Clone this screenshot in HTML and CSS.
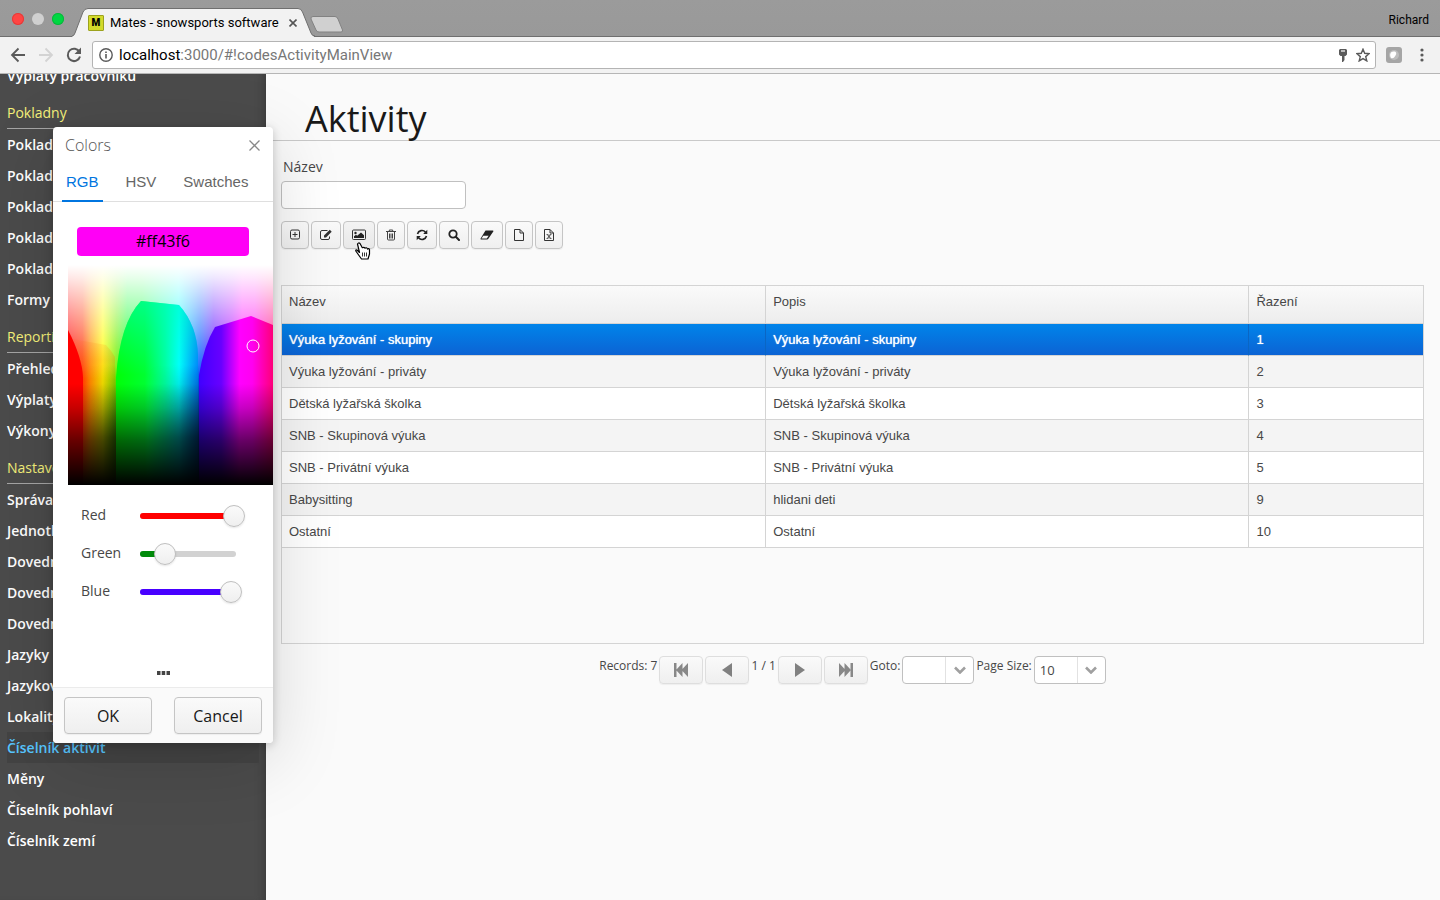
FILE: index.html
```
<!DOCTYPE html>
<html lang="cs">
<head>
  <meta charset="UTF-8" />
  <meta name="viewport" content="width=device-width, initial-scale=1" />
  <title>Mates - snowsports software</title>
  <link rel="stylesheet" href="styles.css">
</head>
<body>
  <header class="browser">
    <div class="tab-strip">
      <div class="lights"><span class="light red"></span><span class="light grey"></span><span class="light green"></span></div>
      <div class="browser-tab">
        <svg class="tab-shape" width="244" height="29" viewBox="0 0 244 29"><path d="M0 28.5 C2 28 2 27 3 25 L11 4 Q12.500 .5 16 .5 H226 Q229 .5 230.500 4 L239 25 Q240 28 242 28.500 V29 H0Z" fill="#f2f2f2"/><path d="M0 28 Q2 28 3 25 L11 4 Q12.500 .5 16 .5 H226 Q229 .5 230.500 4 L239 25 Q240 28 243 28" fill="none" stroke="#6f6f6f"/></svg>
        <div class="tab-content">
          <span class="favicon">M</span>
          <span class="tab-title">Mates - snowsports software</span>
          <button class="bare" aria-label="Close tab"><svg width="8" height="8" viewBox="0 0 8 8"><path d="M.5.5l7 7M7.500.5l-7 7" stroke="#555" stroke-width="1.600"/></svg></button>
        </div>
      </div>
      <button class="bare new-tab" aria-label="New tab"><svg width="34" height="17" viewBox="0 0 34 17"><path d="M3 .5H25Q27 .5 28 3L32.500 14Q33 16 31 16H9Q7 16 6 14L1 3Q.5.5 3 .5Z" fill="#d0d0d0" stroke="#828282"/></svg></button>
      <span class="profile">Richard</span>
    </div>
    <div class="toolbar">
      <button class="bare" aria-label="Back"><svg width="16" height="16" viewBox="0 0 16 16"><path d="M15 8H2M8.500 1.500L2 8l6.500 6.500" fill="none" stroke="#5a5a5a" stroke-width="1.800"/></svg></button>
      <button class="bare" aria-label="Forward"><svg width="16" height="16" viewBox="0 0 16 16"><path d="M1 8H14M7.500 1.500L14 8l-6.500 6.500" fill="none" stroke="#d3d3d3" stroke-width="1.800"/></svg></button>
      <button class="bare" aria-label="Reload"><svg width="16" height="16" viewBox="0 0 16 16"><path d="M13.500 5A6.200 6.200 0 1 0 14 9.500" fill="none" stroke="#5a5a5a" stroke-width="2"/><path d="M15 .5V7H8.500Z" fill="#5a5a5a"/></svg></button>
      <div class="address">
        <svg width="14" height="14" viewBox="0 0 14 14"><circle cx="7" cy="7" r="6.200" fill="none" stroke="#5a5a5a" stroke-width="1.400"/><path d="M6.200 6h1.600v4.500H6.200zM6.200 3.400h1.600V5H6.200z" fill="#5a5a5a"/></svg>
        <span class="url"><b>localhost</b>:3000/#!codesActivityMainView</span>
        <svg width="8" height="13" viewBox="0 0 8 13"><path d="M1 0h6l1 1v4.500L6.500 7H5.500v4L4 13H3V7H1.500L0 5.500V1Z" fill="#5a5a5a"/><path d="M2 2h4" stroke="#fff" stroke-width="1.200"/></svg>
        <svg class="star" width="14" height="14" viewBox="0 0 14 14"><path d="M7 1.200l1.700 4.100 4.400.4-3.400 2.900 1.100 4.300L7 10.600l-3.800 2.300 1.100-4.300L.9 5.700l4.400-.4Z" fill="none" stroke="#5a5a5a" stroke-width="1.400"/></svg>
      </div>
      <svg class="extension" width="16" height="16" viewBox="0 0 16 16"><rect width="16" height="16" rx="3" fill="#a5a5a5"/><circle cx="8" cy="8" r="5" fill="#bdbdbd"/><path d="M5 11C3 7 5 4 8 4.500c2-.5 3 2 1.500 4C8.500 10.500 7 12 5 11Z" fill="#fff"/></svg>
      <button class="bare" aria-label="Menu"><svg width="4" height="14" viewBox="0 0 4 14"><circle cx="2" cy="2" r="1.600" fill="#5a5a5a"/><circle cx="2" cy="7" r="1.600" fill="#5a5a5a"/><circle cx="2" cy="12" r="1.600" fill="#5a5a5a"/></svg></button>
    </div>
  </header>

  <div class="app">
    <nav class="sidebar">
      <div class="menu">
        <a href="#">Výplaty pracovníků</a>
        <h2>Pokladny</h2>
        <a href="#">Pokladny</a>
        <a href="#">Pokladny</a>
        <a href="#">Pokladny</a>
        <a href="#">Pokladny</a>
        <a href="#">Pokladny</a>
        <a href="#">Formy</a>
        <h2>Reporting</h2>
        <a href="#">Přehledy</a>
        <a href="#">Výplaty</a>
        <a href="#">Výkony</a>
        <h2>Nastavení</h2>
        <a href="#">Správa</a>
        <a href="#">Jednotky</a>
        <a href="#">Dovednosti</a>
        <a href="#">Dovednosti</a>
        <a href="#">Dovednosti</a>
        <a href="#">Jazyky</a>
        <a href="#">Jazykové</a>
        <a href="#">Lokality</a>
        <a href="#" class="active">Číselník aktivit</a>
        <a href="#">Měny</a>
        <a href="#">Číselník pohlaví</a>
        <a href="#">Číselník zemí</a>
      </div>
    </nav>

    <main class="content">
      <h1>Aktivity</h1>
      <div class="view">
        <label class="field-label" for="nazev">Název</label>
        <input class="field" id="nazev" type="text">

        <div class="actions">
          <button class="btn" aria-label="Přidat"><svg width="10" height="12" viewBox="0 0 10 12"><rect x=".5" y="1" width="9" height="9" rx="1.500" fill="none" stroke="#333"/><path d="M5 3v5M2.500 5.500h5" stroke="#333"/></svg></button>
          <button class="btn" aria-label="Upravit"><svg width="12" height="12" viewBox="0 0 12 12"><path d="M7.500 1.500H2Q.5 1.500.5 3v6Q.5 10.500 2 10.500h6Q9.500 10.500 9.500 9V7.500" fill="none" stroke="#333"/><path d="M4 6.500L9.800.8l1.900 1.900L6 8.500H4Z" fill="#333"/></svg></button>
          <button class="btn hover" aria-label="Barva"><svg width="14" height="12" viewBox="0 0 14 12"><rect x=".5" y="1" width="13" height="9.500" rx="1" fill="none" stroke="#333"/><circle cx="3.500" cy="4" r="1.200" fill="#222"/><path d="M2 9V7.200L4 5.800l1.200 1L9 3.500l3 2.800V9Z" fill="#222"/></svg></button>
          <button class="btn" aria-label="Smazat"><svg width="10" height="12" viewBox="0 0 10 12"><path d="M0 2.500h10M3.300 2.500V1h3.400v1.500M1.500 2.500V10q0 1 1 1h5q1 0 1-1V2.500M3.500 4.500v5M5 4.500v5M6.500 4.500v5" fill="none" stroke="#444"/></svg></button>
          <button class="btn" aria-label="Obnovit"><svg width="12" height="12" viewBox="0 0 12 12"><path d="M1.500 5A4.600 4.600 0 0 1 9.500 3.200M10.500 7A4.600 4.600 0 0 1 2.500 8.800" fill="none" stroke="#222" stroke-width="1.600"/><path d="M11.300.8V5H7.200ZM.7 11.200V7h4.100Z" fill="#222"/></svg></button>
          <button class="btn" aria-label="Hledat"><svg width="12" height="12" viewBox="0 0 12 12"><circle cx="5" cy="5" r="3.700" fill="none" stroke="#222" stroke-width="1.800"/><path d="M7.800 7.800L11 11" stroke="#222" stroke-width="2" stroke-linecap="round"/></svg></button>
          <button class="btn" aria-label="Vyčistit"><svg width="14" height="12" viewBox="0 0 14 12"><path d="M5.500 1.500H13q.8.3.3 1L8.700 9.300Q8 10.500 7 10.500H1Q.2 10.200.6 9.400Z" fill="#222"/><path d="M3.300 6.800H8.600L6.800 9.500H1.400Z" fill="#f4f4f4"/></svg></button>
          <button class="btn" aria-label="Nový dokument"><svg width="10" height="12" viewBox="0 0 10 12"><path d="M.5.5h5.500L9.500 4v7.500H.5ZM6 .5V4h3.500" fill="none" stroke="#333"/></svg></button>
          <button class="btn" aria-label="Export do Excelu"><svg width="10" height="12" viewBox="0 0 10 12"><path d="M.5.5h5.500L9.500 4v7.500H.5ZM6 .5V4h3.500M3.300 5.500l3.400 4M6.700 5.500l-3.400 4" fill="none" stroke="#333"/><path d="M2.500 5.500h2M5.500 5.500h2M2.500 9.500h2M5.500 9.500h2" stroke="#333" stroke-width=".6"/></svg></button>
        </div>

        <div class="grid">
          <table>
            <thead>
              <tr><th class="wide">Název</th><th class="wide">Popis</th><th>Řazení</th></tr>
            </thead>
            <tbody>
              <tr class="selected"><td>Výuka lyžování - skupiny</td><td>Výuka lyžování - skupiny</td><td>1</td></tr>
              <tr><td>Výuka lyžování - priváty</td><td>Výuka lyžování - priváty</td><td>2</td></tr>
              <tr><td>Dětská lyžařská školka</td><td>Dětská lyžařská školka</td><td>3</td></tr>
              <tr><td>SNB - Skupinová výuka</td><td>SNB - Skupinová výuka</td><td>4</td></tr>
              <tr><td>SNB - Privátní výuka</td><td>SNB - Privátní výuka</td><td>5</td></tr>
              <tr><td>Babysitting</td><td>hlidani deti</td><td>9</td></tr>
              <tr><td>Ostatní</td><td>Ostatní</td><td>10</td></tr>
            </tbody>
          </table>
        </div>

        <div class="pager">
          <span>Records: 7</span>
          <button class="btn page-btn" aria-label="First page"><svg width="14" height="14" viewBox="0 0 14 14"><path d="M0 0h2.500v14H0ZM8.500 0v14L2 7ZM14 0v14L7.500 7Z" fill="#888"/></svg></button>
          <button class="btn page-btn" aria-label="Previous page"><svg width="14" height="14" viewBox="0 0 14 14"><path d="M12 0v14L2 7Z" fill="#808080"/></svg></button>
          <span>1 / 1</span>
          <button class="btn page-btn" aria-label="Next page"><svg width="14" height="14" viewBox="0 0 14 14"><path d="M2 0v14l10-7Z" fill="#808080"/></svg></button>
          <button class="btn page-btn" aria-label="Last page"><svg width="14" height="14" viewBox="0 0 14 14"><path d="M11.500 0H14v14h-2.500ZM5.500 0v14L12 7ZM0 0v14l6.500-7Z" fill="#888"/></svg></button>
          <label for="goto">Goto:</label>
          <div class="combo">
            <select id="goto"><option></option></select>
            <span class="combo-arrow"><svg width="12" height="8" viewBox="0 0 12 8"><path d="M1 1.500l5 5 5-5" fill="none" stroke="#a0a0a0" stroke-width="2.600"/></svg></span>
          </div>
          <label for="size">Page Size:</label>
          <div class="combo">
            <select id="size"><option>10</option></select>
            <span class="combo-arrow"><svg width="12" height="8" viewBox="0 0 12 8"><path d="M1 1.500l5 5 5-5" fill="none" stroke="#a0a0a0" stroke-width="2.600"/></svg></span>
          </div>
        </div>
      </div>
    </main>
  </div>

  <div class="window" role="dialog" aria-labelledby="window-title">
    <div class="window-header">
      <span id="window-title">Colors</span>
      <button class="bare" aria-label="Close"><svg width="11" height="11" viewBox="0 0 11 11"><path d="M.5.5l10 10M10.500.5l-10 10" stroke="#888" stroke-width="1.300"/></svg></button>
    </div>
    <div class="tabs">
      <button class="tab current">RGB</button>
      <button class="tab">HSV</button>
      <button class="tab">Swatches</button>
    </div>
    <input class="hex" type="text" value="#ff43f6" aria-label="Color">
    <svg class="spectrum" width="205" height="220" viewBox="0 0 205 220">
      <defs>
        <linearGradient id="hue" gradientUnits="userSpaceOnUse" x1="0" y1="0" x2="205" y2="0">
          <stop offset="0" stop-color="#f00"/>
          <stop offset=".07" stop-color="#ff3000"/>
          <stop offset=".11" stop-color="#ff9000"/>
          <stop offset=".17" stop-color="#ff0"/>
          <stop offset=".235" stop-color="#70f000"/>
          <stop offset=".29" stop-color="#00ff20"/>
          <stop offset=".36" stop-color="#00ff30"/>
          <stop offset=".5" stop-color="#00ffd0"/>
          <stop offset=".54" stop-color="#0ff"/>
          <stop offset=".64" stop-color="#0060ff"/>
          <stop offset=".71" stop-color="#5000ff"/>
          <stop offset=".8" stop-color="#b000ff"/>
          <stop offset=".85" stop-color="#f0f"/>
          <stop offset=".91" stop-color="#f0e"/>
          <stop offset="1" stop-color="#ff0070"/>
        </linearGradient>
        <linearGradient id="green" gradientUnits="userSpaceOnUse" x1="48" y1="0" x2="130" y2="0">
          <stop offset="0" stop-color="#00ff08"/>
          <stop offset=".35" stop-color="#00ff30"/>
          <stop offset=".6" stop-color="#00ffa0"/>
          <stop offset=".77" stop-color="#0ff"/>
          <stop offset="1" stop-color="#0080ff"/>
        </linearGradient>
        <linearGradient id="violet" gradientUnits="userSpaceOnUse" x1="131" y1="0" x2="205" y2="0">
          <stop offset="0" stop-color="#4000ff"/>
          <stop offset=".3" stop-color="#6800ff"/>
          <stop offset=".55" stop-color="#f0f"/>
          <stop offset=".72" stop-color="#ff00f0"/>
          <stop offset="1" stop-color="#ff0078"/>
        </linearGradient>
        <linearGradient id="white" x2="0" y2="1">
          <stop offset="0" stop-color="#fff"/>
          <stop offset=".06" stop-color="#fff" stop-opacity=".9"/>
          <stop offset=".3" stop-color="#fff" stop-opacity=".45"/>
          <stop offset=".52" stop-color="#fff" stop-opacity="0"/>
        </linearGradient>
        <linearGradient id="teal" x2="0" y2="1">
          <stop offset="0" stop-color="#00ffc0" stop-opacity=".6"/>
          <stop offset=".4" stop-color="#00ffc0" stop-opacity="0"/>
        </linearGradient>
        <linearGradient id="warm" x2="0" y2="1">
          <stop offset="0" stop-color="#ff7000" stop-opacity=".1"/>
          <stop offset=".25" stop-color="#ff7000" stop-opacity=".25"/>
          <stop offset="1" stop-color="#ff7000" stop-opacity="0"/>
        </linearGradient>
        <linearGradient id="black" x2="0" y2="1">
          <stop offset=".54" stop-opacity="0"/>
          <stop offset=".65" stop-opacity=".22"/>
          <stop offset=".8" stop-opacity=".6"/>
          <stop offset="1" stop-opacity="1"/>
        </linearGradient>
        <linearGradient id="seam" x2="1" y2="0">
          <stop offset="0" stop-opacity="0"/>
          <stop offset="1" stop-opacity=".55"/>
        </linearGradient>
        <linearGradient id="seam-fade" x2="0" y2="1">
          <stop offset="0" stop-color="#000"/>
          <stop offset=".6" stop-color="#fff"/>
        </linearGradient>
        <mask id="lower"><rect y="100" width="205" height="120" fill="url(#seam-fade)"/></mask>
      </defs>
      <rect width="205" height="220" fill="url(#hue)"/>
      <rect width="205" height="220" fill="url(#white)"/>
      <path d="M0 74H5L38 80Q44 86 47 92V160H0Z" fill="url(#warm)"/>
      <path d="M0 65Q14 92 15 112V220H0Z" fill="#f00"/>
      <path d="M48 220V112Q52 58 73 36L111 40Q129 60 130 90V220Z" fill="url(#green)"/>
      <path d="M48 220V112Q52 58 73 36L111 40Q129 60 130 90V220Z" fill="url(#teal)"/>
      <path d="M131 220V110Q136 80 147 62L183 51L205 60V220Z" fill="url(#violet)"/>
      <g mask="url(#lower)">
        <rect x="15" y="90" width="33" height="130" fill="url(#seam)"/>
        <rect x="80" y="90" width="51" height="130" fill="url(#seam)"/>
      </g>
      <rect width="205" height="220" fill="url(#black)"/>
      <circle cx="185" cy="81" r="6" fill="none" stroke="#fff"/>
    </svg>
    <div class="sliders">
      <label for="red">Red</label>
      <div class="slider"><span class="slider-fill fill-red" style="width: 100%"></span><input id="red" type="range" min="0" max="255" value="255"></div>
      <label for="green-value">Green</label>
      <div class="slider"><span class="slider-fill fill-green" style="width: 26%"></span><input id="green-value" type="range" min="0" max="255" value="67"></div>
      <label for="blue">Blue</label>
      <div class="slider"><span class="slider-fill fill-blue" style="width: 96%"></span><input id="blue" type="range" min="0" max="255" value="246"></div>
    </div>
    <button class="bare more" aria-label="More"><svg width="13" height="4" viewBox="0 0 13 4"><path d="M0 0h3.500v4H0ZM4.700 0h3.500v4H4.700ZM9.500 0H13v4H9.500Z" fill="#444"/></svg></button>
    <div class="window-footer">
      <button class="btn">OK</button>
      <button class="btn">Cancel</button>
    </div>
  </div>

  <svg class="cursor" width="16" height="18" viewBox="0 0 16 18"><path d="M4.500 10.500L2 8Q.5 7.500.8 9L4 13.500L6.500 17H13L14.500 12V7.500Q13.500 6 12.500 7Q11.500 5 10 6.200Q9 4.700 7.300 5.700L5 1.500Q3.500.2 2.500 2Z" fill="#fff" stroke="#000" stroke-width="1.200" stroke-linejoin="round"/><path d="M7.500 10.500v4M9.500 10.500v4M11.500 10.500v4" stroke="#000" stroke-width=".8"/></svg>
</body>
</html>
```
FILE: styles.css
```
* {
  box-sizing: border-box;
}
body {
  margin: 0;
  height: 100vh;
  display: flex;
  flex-direction: column;
  overflow: hidden;
  font-family: "Open Sans", sans-serif;
  font-size: 14px;
  color: #474747;
  background: #fafafa;
}
svg {
  display: block;
  flex: none;
}
button, input, select {
  font: inherit;
  color: inherit;
}
.bare {
  background: none;
  border: none;
  padding: 0;
}

/* browser */
.browser {
  flex: none;
  font-family: Roboto, sans-serif;
  color: #000;
}
.tab-strip {
  height: 37px;
  display: flex;
  align-items: flex-end;
  background: linear-gradient(#9b9b9b, #999);
  box-shadow: inset 0 -1px #6f6f6f;
}
.lights {
  display: flex;
  gap: 8px;
  padding: 0 14px 12px 12px;
}
.light {
  width: 12px;
  height: 12px;
  border-radius: 50%;
}
.red {
  background: #ff4543;
}
.grey {
  background: #d0d0d0;
}
.green {
  background: #00d742;
}
.light.red {
  box-shadow: inset 0 0 0 1px #e33b39;
}
.light.green {
  box-shadow: inset 0 0 0 1px #0bb53c;
}
.browser-tab {
  display: grid;
  margin-left: -6px;
}
.tab-shape, .tab-content {
  grid-area: 1 / 1;
}
.tab-content {
  display: flex;
  align-items: center;
  padding: 0 19px 0 16px;
}
.favicon {
  width: 16px;
  height: 16px;
  margin-right: 6px;
  border: 1px solid #9ca21d;
  border-radius: 1px;
  background: #d3da2b;
  font-size: 10px;
  line-height: 14px;
  font-weight: 900;
  text-align: center;
}
.tab-title {
  flex: 1;
  font-size: 13px;
  white-space: nowrap;
}
.new-tab {
  margin: 0 0 4px -6px;
}
.profile {
  margin-left: auto;
  padding: 0 11px 9px 0;
  font-size: 12px;
  line-height: 15px;
}
.toolbar {
  height: 37px;
  display: flex;
  align-items: center;
  gap: 12px;
  padding: 0 16px 0 10px;
  background: #f2f2f2;
  border-bottom: 1px solid #b6b6b6;
}
.address {
  flex: 1;
  height: 28px;
  margin-left: -2px;
  padding: 0 5px 0 6px;
  display: flex;
  align-items: center;
  gap: 6px;
  background: #fff;
  border: 1px solid #b4b4b4;
  border-radius: 3px;
}
.url {
  flex: 1;
  font-size: 15px;
  color: #777;
}
.url b {
  font-weight: 400;
  color: #000;
}
.star {
  margin-left: 3px;
}
.extension {
  margin: 0 6px 0 -2px;
}

/* menu */
.app {
  flex: 1;
  min-height: 0;
  display: flex;
}
.sidebar {
  width: 266px;
  flex: none;
  overflow: hidden;
  padding: 0 7px;
  background: #4b4b4b;
  box-shadow: inset -8px 0 8px -6px #3a3a3a;
}
.menu {
  margin-top: -14px;
}
.menu a {
  display: block;
  line-height: 31px;
  font-weight: 600;
  color: #fff;
  text-decoration: none;
}
.menu h2 {
  margin: 0;
  padding-top: 6px;
  border-bottom: 1px solid #a5a5a5;
  font-size: 14px;
  line-height: 31px;
  font-weight: 400;
  color: #f4f07a;
}
.menu a.active {
  background: #434343;
  color: #57c6ff;
}

/* content */
.content {
  flex: 1;
  min-width: 0;
}
h1 {
  margin: 0;
  height: 67px;
  padding: 20px 0 0 39px;
  border-bottom: 1px solid #c9c9c9;
  font-size: 36px;
  line-height: 50px;
  font-weight: 400;
  color: #191919;
}
.view {
  padding: 16px 16px 0 15px;
}
.field-label {
  display: block;
  padding-left: 2px;
  margin-bottom: 4px;
  line-height: 20px;
}
.field {
  display: block;
  width: 185px;
  height: 28px;
  border: 1px solid #c0c0c0;
  border-radius: 4px;
  background: #fff;
}
.btn {
  display: flex;
  align-items: center;
  justify-content: center;
  height: 28px;
  padding: 0 8px;
  border: 1px solid #c5c5c5;
  border-radius: 4px;
  background: linear-gradient(#fafafa, #efefef);
  box-shadow: 0 1px 1px rgba(0,0,0,0.05);
}
.btn.hover {
  background: linear-gradient(#f3f3f3, #e8e8e8);
}
.actions {
  display: flex;
  gap: 2px;
  margin: 12px 0 36px;
}
.grid {
  height: 359px;
  border: 1px solid #d4d4d4;
  font-family: "Liberation Sans", Arial, sans-serif;
  font-size: 13px;
}
table {
  width: 100%;
  table-layout: fixed;
  border-collapse: separate;
  border-spacing: 0;
}
th, td {
  height: 32px;
  padding: 0 7px;
  border-bottom: 1px solid #d4d4d4;
  border-left: 1px solid #d4d4d4;
  text-align: left;
  font-weight: 400;
}
th:first-child, td:first-child {
  border-left: none;
}
.wide {
  width: 42.35%;
}
th {
  height: 38px;
  padding-bottom: 6px;
  background: linear-gradient(#fafafa, #ededed);
}
td {
  background: #fff;
}
tr:nth-child(even) td {
  background: #f4f4f4;
}
.selected td {
  background: linear-gradient(#0084ea, #0c63d4);
  border-left-color: #0a66c4;
  color: #fff;
  text-shadow: 0 0 1px #fff;
}
.pager {
  display: flex;
  justify-content: center;
  gap: 2px;
  margin-top: 12px;
  font-size: 12px;
  line-height: 19px;
}
.page-btn {
  width: 44px;
  border-color: #dedede;
}
.combo {
  display: grid;
  grid-template-columns: 42px 28px;
  height: 28px;
  border: 1px solid #c0c0c0;
  border-radius: 4px;
  background: #fff;
}
.combo select {
  grid-area: 1 / 1 / 2 / 3;
  appearance: none;
  border: none;
  padding: 0 5px;
  background: none;
  font-size: 13px;
}
.combo-arrow {
  grid-area: 1 / 2;
  display: flex;
  align-items: center;
  justify-content: center;
  border-left: 1px solid #e2e2e2;
  pointer-events: none;
}

/* color window */
.window {
  position: absolute;
  left: 53px;
  top: 127px;
  width: 220px;
  display: flex;
  flex-direction: column;
  overflow: hidden;
  border-radius: 4px;
  background: #fff;
  box-shadow: 0 2px 10px rgba(0,0,0,0.2), 0 16px 70px rgba(0,0,0,0.15);
}
.window-header {
  display: flex;
  justify-content: space-between;
  align-items: center;
  height: 36px;
  padding: 0 13px 0 12px;
  font-size: 16px;
  font-weight: 300;
  color: #555;
}
.tabs {
  display: flex;
  gap: 19px;
  height: 39px;
  padding-left: 9px;
  box-shadow: inset 0 -1px #dfdfdf;
  font-family: "Liberation Sans", Arial, sans-serif;
  font-size: 15px;
  color: #666;
}
.tab {
  background: none;
  border: none;
  border-bottom: 2px solid transparent;
  padding: 0 4px;
}
.tab.current {
  border-color: #0075e0;
  color: #0075e0;
}
.hex {
  width: 172px;
  height: 29px;
  margin: 25px 24px 9px;
  padding: 0 0 2px;
  border: none;
  border-radius: 4px;
  background: #ff00f6;
  color: #000;
  font-size: 16px;
  text-align: center;
}
.spectrum {
  align-self: flex-end;
}
.sliders {
  display: grid;
  grid-template-columns: 59px 96px;
  grid-auto-rows: 38px;
  align-items: center;
  padding: 12px 28px 0;
}
.sliders label {
  padding-bottom: 3px;
}
.slider {
  display: grid;
  align-items: center;
}
.slider::before, .slider-fill, .slider input {
  grid-area: 1 / 1;
}
.slider::before, .slider-fill {
  content: "";
  height: 6px;
  border-radius: 3px;
  background: #d2d2d2;
}
.slider .fill-red {
  background: #f00;
}
.slider .fill-green {
  background: #008a0a;
}
.slider .fill-blue {
  background: #4800ff;
}
.slider input {
  appearance: none;
  width: 116px;
  height: 22px;
  margin: 0 -11px;
  background: none;
}
.slider input::-webkit-slider-thumb {
  appearance: none;
  width: 22px;
  height: 22px;
  border: 1px solid #bfbfbf;
  border-radius: 50%;
  background: linear-gradient(#fafafa, #efefef);
  box-shadow: 0 1px 2px rgba(0,0,0,0.1);
}
.more {
  align-self: center;
  margin: 60px 0 12px;
}
.window-footer {
  display: flex;
  justify-content: space-between;
  padding: 9px 11px;
  border-top: 1px solid #ebebeb;
  background: #fafafa;
}
.window-footer .btn {
  width: 88px;
  height: 37px;
  font-size: 16px;
  color: #191919;
}

.cursor {
  position: absolute;
  left: 355px;
  top: 242px;
}
```
